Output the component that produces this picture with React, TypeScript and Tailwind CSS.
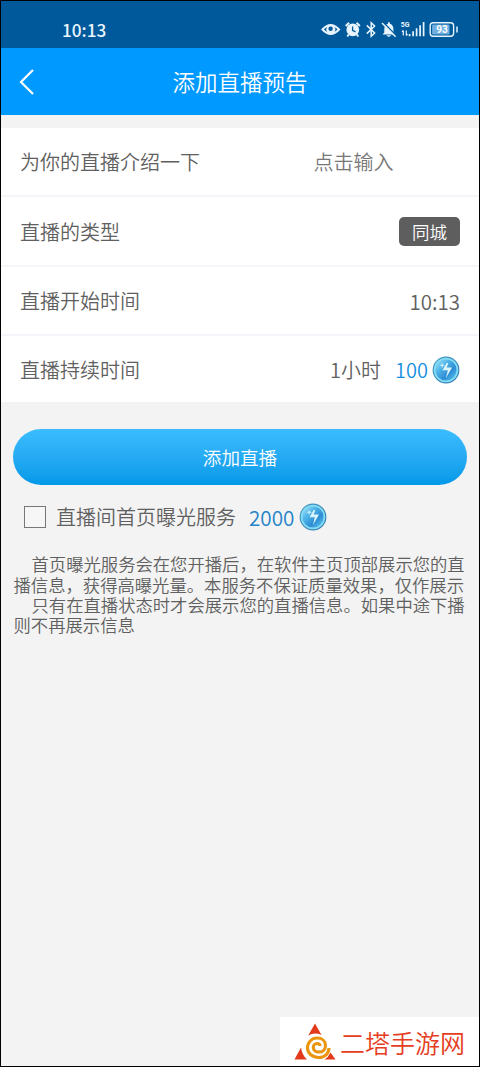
import type { ReactNode } from "react";

function Coin() {
  return (
    <svg className="block h-7 w-7 shrink-0" viewBox="0 0 28 28">
      <defs>
        <linearGradient id="coinRim" x1="0" y1="0" x2="1" y2="1">
          <stop offset="0" stopColor="#4c9fc4" />
          <stop offset="1" stopColor="#2b74ae" />
        </linearGradient>
        <linearGradient id="coinFace" x1="0" y1="0" x2="1" y2="1">
          <stop offset="0" stopColor="#a4e4f8" />
          <stop offset="0.35" stopColor="#4fb4e8" />
          <stop offset="0.65" stopColor="#2f8cd4" />
          <stop offset="1" stopColor="#5fd0f5" />
        </linearGradient>
      </defs>
      <circle cx="14" cy="14" r="13.4" fill="url(#coinRim)" />
      <circle cx="14" cy="14" r="12.3" fill="#84dcf5" />
      <circle cx="14" cy="14" r="10.6" fill="url(#coinFace)" />
      <path d="M14.8 6.8L10.5 14.2H15.8L14 22L20 11.6H14.6L16.3 7.6Z" fill="#dcf5fd" />
      <path d="M7.5 9.2L9.4 8.6L10 7L11 8.6L13 9.2L11 10L10.2 12L9.4 10Z" fill="#c4ecfa" />
    </svg>
  );
}

function StatusIcons() {
  return (
    <svg className="block h-5 w-[140px]" viewBox="0 0 140 20" fill="none" stroke="#e8f5ff">
      <path d="M1.5 9.5Q9.7 0.5 18 9.5Q9.7 18.5 1.5 9.5Z" strokeWidth="2" />
      <circle cx="9.8" cy="9.5" r="4.6" fill="#e8f5ff" stroke="none" />
      <circle cx="9.6" cy="8.8" r="2.2" fill="#00599a" stroke="none" />
      <circle cx="31.8" cy="9.8" r="6.4" fill="#e8f5ff" stroke="none" />
      <path d="M24.7 6L28.1 2.8M38.9 6L35.5 2.8M27.7 14.6L26.3 16.5M35.9 14.6L37.3 16.5" strokeWidth="1.9" />
      <path d="M31.6 6.5V10.3L34.5 11.8" stroke="#00599a" strokeWidth="1.3" />
      <path d="M45.8 5.4L53.6 13L50.2 16.2V2.8L53.6 6L45.8 13.6" strokeWidth="1.5" />
      <path d="M61.5 14.5L63.3 12.4V8.6Q63.8 4.3 67 3.7V2.3H68.8V3.7Q72 4.5 72.4 8.6V12.4L74.2 14.5Z" fill="#e8f5ff" stroke="none" />
      <path d="M65.4 15.3H70.2Q67.8 18.3 65.4 15.3Z" fill="#e8f5ff" stroke="none" />
      <path d="M62.5 2.6L75.5 16" stroke="#00599a" strokeWidth="1.4" />
      <path d="M61 3L74.6 16.8" strokeWidth="1.5" />
      <text x="79.8" y="7.4" fill="#e8f5ff" stroke="none" className="font-['Roboto',sans-serif] text-[7px] font-bold">5G</text>
      <path d="M82.3 10.5V15.5M81 11.8L82.3 10.5M85.3 10.5V15.5M86.6 14.2L85.3 15.5" strokeWidth="1.2" />
      <path d="M88.6 14V16.3M92.1 11.3V16.3M95.6 8.3V16.3M99.1 5.3V16.3M102.6 2V16.3" strokeWidth="1.7" />
      <rect x="109.2" y="2.7" width="23.4" height="13.6" rx="3" strokeWidth="1.4" />
      <rect x="111.1" y="4.5" width="17.4" height="10" rx="1.3" fill="#70afe0" stroke="none" />
      <text x="120.9" y="13.1" textAnchor="middle" fill="white" stroke="none" className="font-['Roboto',sans-serif] text-[10px] font-bold">93</text>
      <path d="M136 6.5V12.5" strokeWidth="1.5" />
    </svg>
  );
}

function Row({ label, children, last = false }: { label: string; children: ReactNode; last?: boolean }) {
  return (
    <div className={`flex items-center justify-between bg-white pt-[1.6px] pr-[19px] pl-[19px] ${last ? "h-[66.5px]" : "h-[69.3px] border-b-2 border-[#f4f5f8]"}`}>
      <span>{label}</span>
      {children}
    </div>
  );
}

function Watermark() {
  return (
    <div className="absolute -right-px -bottom-px flex h-[50px] w-[200px] items-center bg-white">
      <svg className="ml-3.5 h-[38px] w-[42px] shrink-0" viewBox="0 0 42 38">
        <path d="M21 .5L27.5 12Q20.5 9 14.2 12.5ZM7 24.5Q8 32 13 36.5H.5ZM36.5 29.5L41.5 36.5H30.5Q34.5 34 36.5 29.5Z" fill="#e33a1b" />
        <path d="M35 25C35 30.5 30.5 34.5 25 34.5C18.5 34.5 13.5 30.5 13.5 25C13.5 19.5 17.5 15 23 15C28 15 31.5 18 31.5 22.5C31.5 26.5 28.5 29 25 29C21.5 29 19.3 27 19.3 24.5C19.3 22 21 20.5 23 20.5C25 20.5 26 21.5 26 23" fill="none" stroke="#eb950d" strokeWidth="3.1" />
      </svg>
      <span className="ml-1 text-[25px] leading-none whitespace-nowrap text-[#e63c22]">二塔手游网</span>
    </div>
  );
}

export default function App() {
  return (
    <div className="relative flex h-[1067px] w-[480px] flex-col overflow-hidden border border-black bg-[#f3f3f3] font-['Noto_Sans_CJK_SC',sans-serif] text-[20px] leading-none font-[350] text-[#606060]">
      <div className="flex h-[47px] shrink-0 items-center justify-between bg-[#00599a] pt-2.5 pr-[18px] pl-[61px]">
        <span className="text-[17.2px] font-medium text-[#e8f5ff]">10:13</span>
        <StatusIcons />
      </div>
      <header className="grid h-[67px] shrink-0 grid-cols-[60px_1fr_60px] items-center bg-[#0099ff] text-white">
        <svg className="ml-[18px] h-7 w-4" viewBox="0 0 16 28" fill="none" stroke="white" strokeWidth="2.2">
          <path d="M14 2L2 14L14 26" />
        </svg>
        <h1 className="text-center text-[22.5px]">添加直播预告</h1>
      </header>
      <main className="pt-[13px]">
        <Row label="为你的直播介绍一下">
          <span className="mr-[66.5px] text-[#777]">点击输入</span>
        </Row>
        <Row label="直播的类型">
          <span className="flex h-[29px] w-[61px] items-center justify-center rounded-[5px] bg-[#5e5e5e] text-[17.5px] text-white">同城</span>
        </Row>
        <Row label="直播开始时间">
          <span className="text-[20.5px]">10:13</span>
        </Row>
        <Row label="直播持续时间" last>
          <div className="flex items-center">
            <span>1小时</span>
            <span className="ml-3.5 text-[#1690df]">100</span>
            <span className="ml-1"><Coin /></span>
          </div>
        </Row>
        <div className="px-3 pt-[26.6px]">
          <button className="flex h-14 w-full items-center justify-center rounded-full bg-linear-to-b from-[#3bbcff] to-[#0099e8] text-[18.6px] text-white">添加直播</button>
        </div>
        <div className="flex h-[64px] items-center pt-px pl-[23px]">
          <span className="h-[22px] w-[22px] border border-[#777] bg-[#f6f6f6]" />
          <span className="ml-2.5">直播间首页曝光服务</span>
          <span className="ml-[13px] text-[20.7px] text-[#2583c9]">2000</span>
          <span className="ml-[5px]"><Coin /></span>
        </div>
        <div className="pt-[5.5px] pl-[12.5px] text-[17.33px] leading-[20.3px] whitespace-nowrap">
          <p className="pl-[18px]">首页曝光服务会在您开播后，在软件主页顶部展示您的直</p>
          <p>播信息，获得高曝光量。本服务不保证质量效果，仅作展示</p>
          <p className="pl-[18px]">只有在直播状态时才会展示您的直播信息。如果中途下播</p>
          <p>则不再展示信息</p>
        </div>
      </main>
      <Watermark />
    </div>
  );
}
